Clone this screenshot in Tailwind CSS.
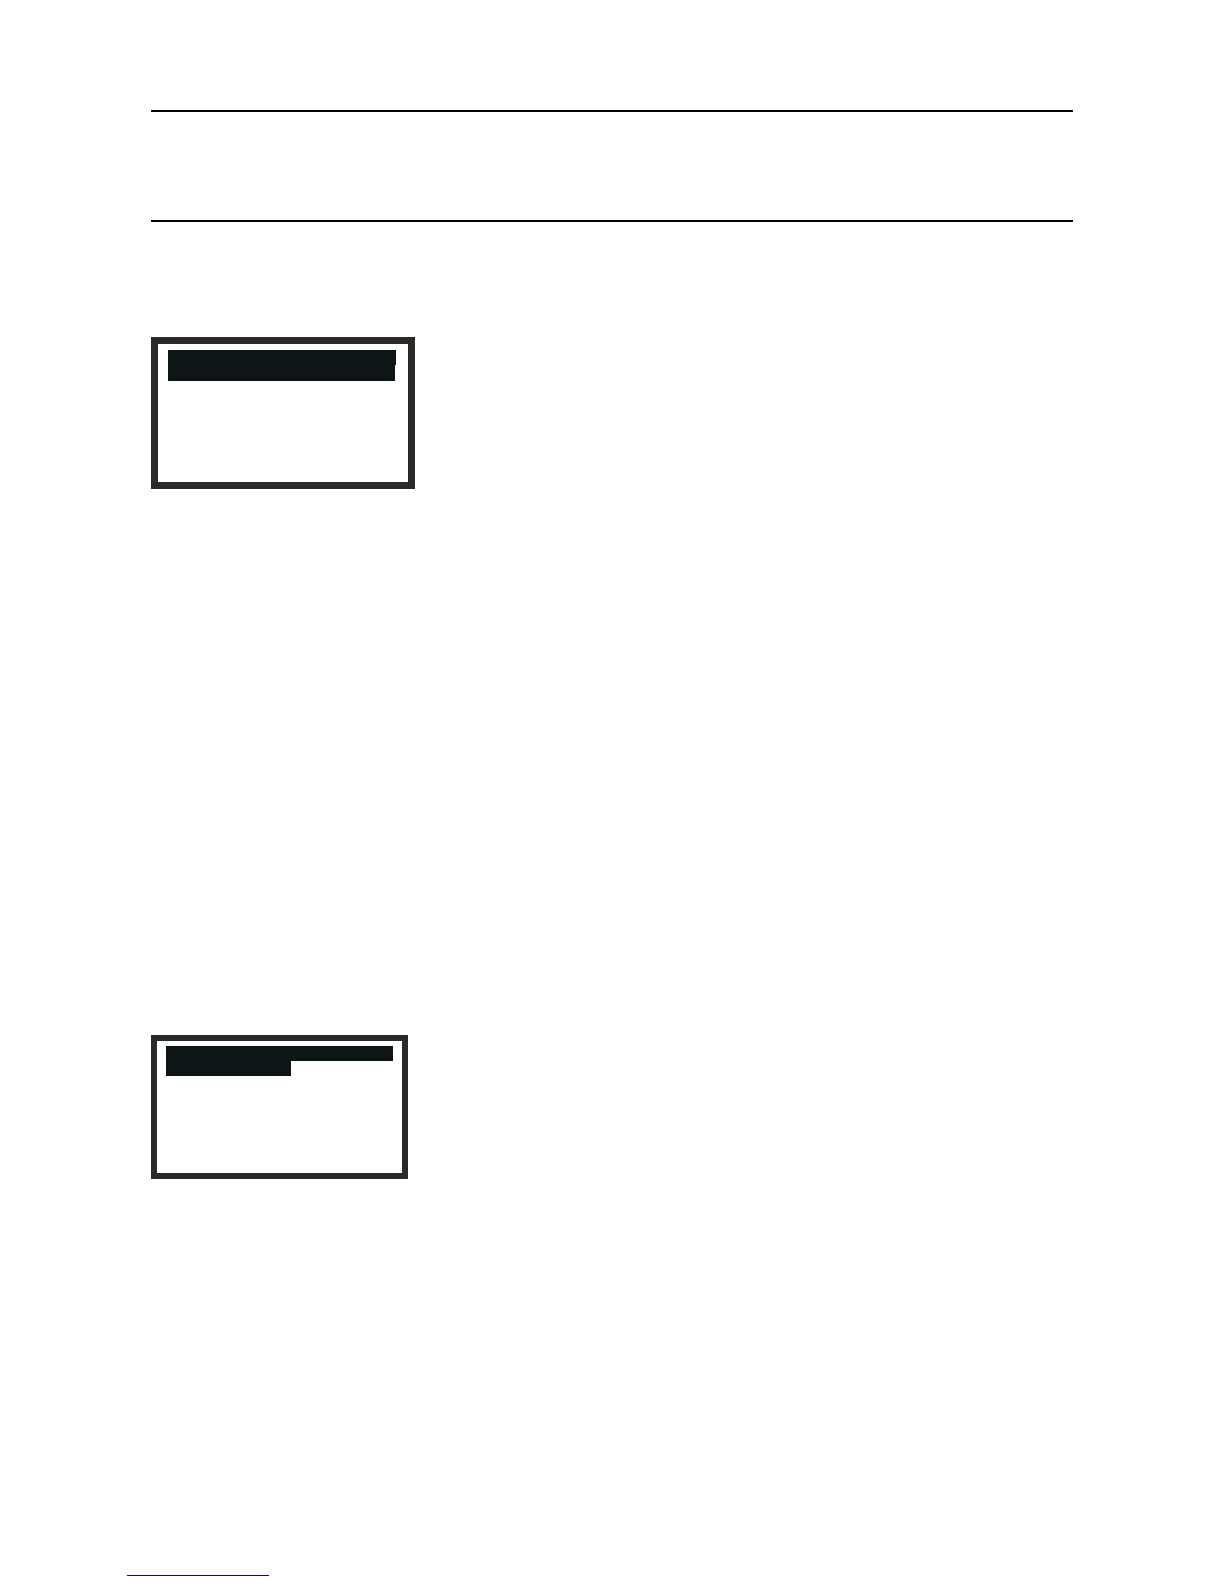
<!DOCTYPE html>
<html lang="en">
<head>
<meta charset="utf-8">
<meta name="viewport" content="width=device-width, initial-scale=1">
<title>Document</title>
<script src="https://cdn.jsdelivr.net/npm/@tailwindcss/browser@4"></script>
</head>
<body class="bg-white">
<div class="flex flex-col pt-[110px] pb-2">
  <header class="mx-[151px] h-28 border-y-2 border-black"></header>
  <main class="mx-[151px] flex flex-col items-start gap-[546px] pt-[115px]">
    <!-- Display panel with two full-width highlighted rows -->
    <section class="h-[152px] w-[264px] border-7 border-[#2d2927] pt-1.5 pl-2.5">
      <div class="h-[15px] w-[228px] bg-[#0d1517]"></div>
      <div class="h-4 w-[227px] bg-[#0d1517]"></div>
    </section>
    <!-- Display panel with a short second row -->
    <section class="h-36 w-[257px] border-6 border-[#2b2927] pt-[5px] pl-[9px]">
      <div class="h-[15px] w-[227px] bg-[#0d1517]"></div>
      <div class="h-[15px] w-[125px] bg-[#0d1517]"></div>
    </section>
  </main>
  <footer class="mt-[396px] ml-[127px]">
    <div class="h-px w-[142px] bg-[#0404bc]"></div>
  </footer>
</div>
</body>
</html>
